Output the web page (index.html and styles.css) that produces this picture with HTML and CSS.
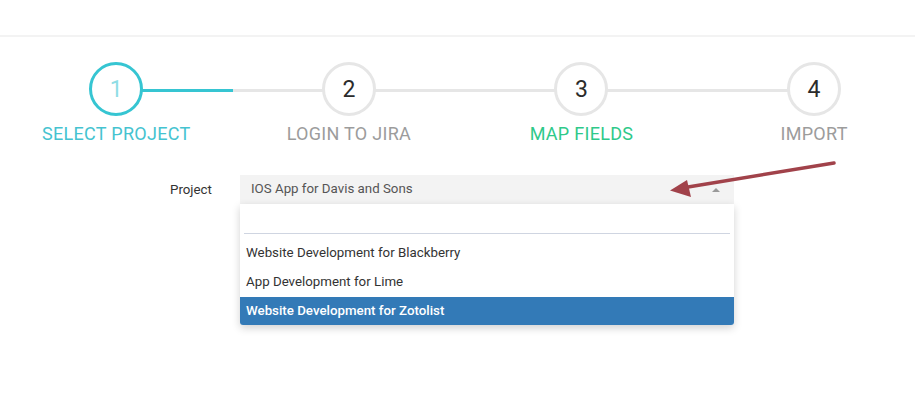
FILE: index.html
```html
<!DOCTYPE html>
<html>
<head>
<meta charset="utf-8">
<link rel="stylesheet" href="styles.css">
</head>
<body>
<div class="topbar"></div>
<div class="steps">
  <div class="step done">
    <div class="track"><span class="half left hidden"></span><span class="half right active"></span><div class="circle">1</div></div>
    <div class="label teal">SELECT PROJECT</div>
  </div>
  <div class="step">
    <div class="track"><span class="half left"></span><span class="half right"></span><div class="circle">2</div></div>
    <div class="label">LOGIN TO JIRA</div>
  </div>
  <div class="step">
    <div class="track"><span class="half left"></span><span class="half right"></span><div class="circle">3</div></div>
    <div class="label green">MAP FIELDS</div>
  </div>
  <div class="step">
    <div class="track"><span class="half left"></span><span class="half right hidden"></span><div class="circle">4</div></div>
    <div class="label">IMPORT</div>
  </div>
</div>
<div class="form-row">
  <label class="field-label">Project</label>
  <div class="select-wrap">
    <div class="select">
      <span class="select-text">IOS App for Davis and Sons</span>
      <span class="caret"></span>
    </div>
    <div class="dropdown">
      <div class="search"><div class="search-input"></div></div>
      <ul class="options">
        <li class="option">Website Development for Blackberry</li>
        <li class="option">App Development for Lime</li>
        <li class="option selected">Website Development for Zotolist</li>
      </ul>
    </div>
  </div>
</div>
<svg class="pointer" width="915" height="397" viewBox="0 0 915 397">
  <line x1="834" y1="163" x2="685" y2="187.5" stroke="#a1424a" stroke-width="3.5" stroke-linecap="round"/>
  <polygon points="670,190.5 687,180 691,197" fill="#a1424a"/>
</svg>
</body>
</html>
```
FILE: styles.css
```css
html, body {
  margin: 0;
  padding: 0;
  background: #fff;
  overflow: hidden;
  width: 915px;
  height: 397px;
  font-family: Roboto, "Liberation Sans", sans-serif;
}
.topbar {
  height: 35px;
  border-bottom: 2px solid #f3f3f3;
}
.steps {
  display: grid;
  grid-template-columns: repeat(4, 232.6px);
  width: 931px;
  padding-top: 25px;
}
.step {
  display: flex;
  flex-direction: column;
  align-items: center;
}
.track {
  position: relative;
  width: 100%;
  height: 54px;
  display: flex;
  justify-content: center;
}
.half {
  position: absolute;
  top: 27px;
  height: 3px;
  width: 50%;
  background: #e6e6e6;
}
.half.left { left: 0; }
.half.right { right: 0; }
.half.active { background: #36c5d2; }
.half.hidden { display: none; }
.circle {
  position: relative;
  box-sizing: border-box;
  width: 54px;
  height: 54px;
  border-radius: 50%;
  border: 3px solid #e6e6e6;
  background: #fff;
  display: flex;
  align-items: center;
  justify-content: center;
  font-size: 23px;
  color: #2b2b2b;
}
.done .circle {
  border-color: #36c5d2;
  color: #8fdde5;
}
.label {
  margin-top: 7px;
  font-size: 18px;
  line-height: 21px;
  color: #9c9c9c;
  letter-spacing: 0.3px;
}
.label.teal { color: #45c3d0; }
.label.green { color: #2ec98a; }
.form-row {
  display: flex;
  align-items: flex-start;
  margin-top: 31px;
  padding-left: 170px;
}
.field-label {
  width: 70px;
  font-size: 13.3px;
  line-height: 29px;
  color: #333;
}
.select-wrap {
  position: relative;
  width: 494px;
}
.select {
  height: 29px;
  background: #f3f3f3;
  display: flex;
  align-items: center;
  justify-content: space-between;
  padding: 0 11px;
  box-sizing: border-box;
}
.select-text {
  font-size: 13.3px;
  color: #555;
  margin-top: -2px;
}
.caret {
  width: 0;
  height: 0;
  border-left: 4px solid transparent;
  border-right: 4px solid transparent;
  border-bottom: 4px solid #9a9a9a;
  margin-right: 3px;
}
.dropdown {
  position: absolute;
  top: 29px;
  left: 0;
  right: 0;
  background: #fff;
  box-shadow: 0 3px 9px rgba(0, 0, 0, 0.18);
  border-radius: 0 0 3px 3px;
  overflow: hidden;
}
.search {
  padding: 4px;
}
.search-input {
  height: 25px;
  border-bottom: 1px solid #cfd5e1;
}
.options {
  list-style: none;
  margin: 0;
  padding: 0;
}
.option {
  height: 29px;
  line-height: 29px;
  padding-left: 6px;
  font-size: 13.3px;
  color: #333;
}
.option.selected {
  background: #337ab7;
  color: #fff;
  font-weight: 500;
  height: 28px;
  line-height: 27px;
  margin-top: 1px;
}
.pointer {
  position: absolute;
  left: 0;
  top: 0;
  pointer-events: none;
}
```
